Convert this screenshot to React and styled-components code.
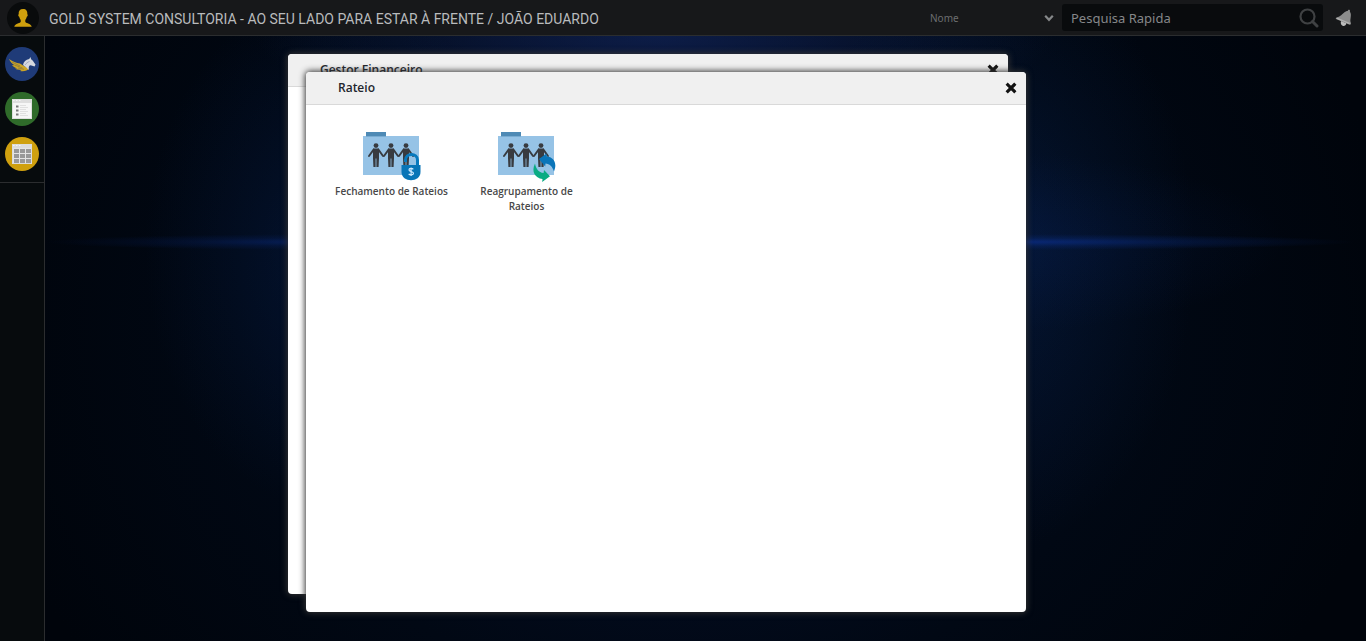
import React from "react";
import styled, { createGlobalStyle } from "styled-components";

const GlobalStyle = createGlobalStyle`
  * { box-sizing: border-box; }
  body {
    margin: 0;
    background: #00040d;
    font-family: "Noto Sans", "Open Sans", sans-serif;
  }
  button, input, select { font-family: inherit; }
`;

const Page = styled.div`
  min-height: 100vh;
  display: flex;
  flex-direction: column;
`;

const TopBar = styled.header`
  height: 36px;
  display: flex;
  align-items: center;
  padding: 0 13px 0 7px;
  background: #17181a;
  border-bottom: 1px solid #2b2d2f;
`;

const UserButton = styled.button`
  width: 32px;
  height: 32px;
  padding: 0;
  border: 0;
  border-radius: 50%;
  background: #090b0c;
  display: grid;
  place-items: center;
`;

const Title = styled.h1`
  flex: 1;
  margin: 0 0 0 10px;
  padding-top: 2px;
  font: 400 14px/20px Roboto, "Open Sans", sans-serif;
  color: #b9bbbd;
  white-space: nowrap;
`;

const Filter = styled.label`
  position: relative;
  display: flex;
  align-items: center;
  width: 132px;
  margin-right: 4px;
  svg { position: absolute; right: 4px; pointer-events: none; }
`;

const Select = styled.select`
  appearance: none;
  width: 100%;
  height: 26px;
  padding: 0 20px 0 4px;
  border: 0;
  background: transparent;
  color: #6c6e70;
  font-size: 10px;
`;

const Search = styled.form`
  display: flex;
  align-items: center;
  width: 261px;
  height: 27px;
  padding: 0 4px 0 9px;
  border-radius: 3px;
  background: #090b0d;
`;

const SearchInput = styled.input`
  flex: 1;
  min-width: 0;
  height: 24px;
  padding: 0;
  border: 0;
  outline: 0;
  background: transparent;
  color: #858789;
  font-size: 13px;
  &::placeholder { color: #858789; opacity: 1; }
`;

const IconButton = styled.button`
  padding: 0;
  border: 0;
  background: transparent;
  display: grid;
  place-items: center;
  margin-left: ${(p) => p.$gap || 0}px;
`;

const Body = styled.div`
  flex: 1;
  display: flex;
`;

const SideBar = styled.nav`
  width: 45px;
  background: #070b0d;
  border-right: 1px solid #2b2d2f;
`;

const Shortcuts = styled.div`
  display: flex;
  flex-direction: column;
  align-items: center;
  gap: 11px;
  padding: 11px 0;
  border-bottom: 1px solid #2b2d2f;
`;

const Shortcut = styled.button`
  width: 34px;
  height: 34px;
  padding: 0;
  border: 0;
  border-radius: 50%;
  background: ${(p) => p.$color};
  display: grid;
  place-items: center;
`;

const Desktop = styled.main`
  flex: 1;
  position: relative;
  min-height: 596px;
  overflow: hidden;
  background:
    radial-gradient(ellipse 350px 8px at 960px 206px, rgba(12, 52, 160, 0.6), rgba(10, 45, 130, 0.3) 50%, transparent),
    radial-gradient(ellipse 290px 8px at 290px 206px, rgba(10, 46, 140, 0.5), rgba(8, 36, 110, 0.25) 50%, transparent),
    radial-gradient(ellipse 300px 90px at 940px 206px, rgba(8, 36, 100, 0.26), transparent),
    radial-gradient(ellipse 200px 300px at 950px 215px, rgba(8, 38, 86, 0.4), transparent),
    radial-gradient(ellipse 190px 260px at 290px 215px, rgba(6, 32, 80, 0.42), transparent),
    radial-gradient(ellipse 400px 90px at 610px 0, rgba(22, 44, 108, 0.55), transparent),
    radial-gradient(ellipse 720px 600px at 640px 290px, #030d24 25%, #010814 62%, #00040b);
`;

const Window = styled.section`
  position: absolute;
  left: ${(p) => p.$x}px;
  top: ${(p) => p.$y}px;
  width: 720px;
  height: 540px;
  border-radius: 4px;
  overflow: hidden;
  background: #fff;
  box-shadow: 0 0 6px 1px #333;
`;

const WindowBar = styled.header`
  display: flex;
  align-items: center;
  justify-content: space-between;
  height: 33px;
  padding: 0 9px 0 32px;
  background: #f0f0f0;
  border-bottom: 1px solid #d9d9d9;
`;

const WindowTitle = styled.h2`
  margin: 0;
  font-family: "Open Sans", sans-serif;
  font-size: 12px;
  line-height: 16px;
  font-weight: 600;
  color: #22252c;
`;

const AppGrid = styled.div`
  display: flex;
  flex-wrap: wrap;
  align-items: flex-start;
  padding: 26px 18px;
`;

const AppItem = styled.button`
  width: 135px;
  padding: 0 10px;
  border: 0;
  background: transparent;
  display: flex;
  flex-direction: column;
  align-items: center;
  gap: 1px;
  color: #484848;
  font-family: "Open Sans", sans-serif;
  font-size: 10px;
  font-weight: 600;
  line-height: 15px;
`;

const CloseIcon = () => (
  <svg width="12" height="12" viewBox="0 0 12 12" fill="none">
    <path d="M2.8 2.8 9.2 9.2M9.2 2.8 2.8 9.2" stroke="#111" strokeWidth="3.2" strokeLinecap="square" />
  </svg>
);

const Person = ({ x }) => (
  <g transform={`translate(${x} 0)`} fill="#383b40">
    <circle cx="0" cy="14.6" r="2.4" />
    <path d="M-3 17.6h6v9.400L2.600 36H.4v-8.500h-.8V36h-2.200l-.4-9z" />
    <path d="M-2.400 18.600-7 25M2.400 18.600 7 25" stroke="#383b40" strokeWidth="1.900" strokeLinecap="round" />
  </g>
);

const LockBadge = () => (
  <g>
    <path d="M43.500 31v-2c0-7.500 12-7.500 12 0v6" fill="none" stroke="#0879bd" strokeWidth="3" />
    <path d="M39.500 34h19v7c0 11-19 11-19 0z" fill="#0875b7" />
    <path
      d="M51.300 38.300c-.8-1.200-4.300-1.400-4.300.6 0 2.200 4.500 1.200 4.500 3.400 0 2-3.800 2-4.800.6M49.100 36.500v8.500"
      fill="none"
      stroke="#cfeaff"
      strokeWidth="1.200"
    />
  </g>
);

const SyncBadge = () => (
  <g>
    <path d="M42 28 49.500 22.500l.2 2.700c7 1 10.800 7 7.300 15.300-1.500-5-4.500-7.800-8.500-8l-.3 3z" fill="#0a75b9" />
    <path d="M38 32.500c-4 8 0 14.500 7.500 15.500l-.3 3 7.800-5.700-6-6.200-.4 2.900c-4.800-.4-7.600-4-8.600-9.500z" fill="#0aab83" />
  </g>
);

const FolderIcon = ({ children }) => (
  <svg width="60" height="52" viewBox="0 0 60 52">
    <path d="M4 1h20v5H4z" fill="#4e8ab5" />
    <path d="M1 5h56v39H1z" fill="#96c3e6" />
    <path d="M4 5h20v1H4z" fill="#78abd1" />
    <Person x={14} />
    <Person x={29} />
    <Person x={44} />
    {children}
  </svg>
);

const UserIcon = () => (
  <svg width="18" height="20" viewBox="0 0 18 20" fill="#cfa00d">
    <path d="M9 1c3.200 0 4.600 2 4.300 5.200.9.300.4 2.200-.5 2.600-.3 1.400-.8 2.400-1.500 3.100v2c1.200 1.500 6 1.500 6.400 4.900H.3c.4-3.400 5.200-3.400 6.400-4.900v-2c-.7-.7-1.200-1.700-1.500-3.100-.9-.4-1.400-2.300-.5-2.600C4.400 3 5.800 1 9 1z" />
  </svg>
);

const PegasusIcon = () => (
  <svg width="28" height="16" viewBox="0 0 28 16">
    <path d="M1 3c4 2.500 7 4 11 4.500l4 2.500 5 2.500c-1.500 2.500-5 3-9 2.500l1.500-1c-3 0-5-.4-6.500-1.400l2.500-.2C6.500 11.500 5 10.500 4 9l2.600.3C4 7.500 2 5.500 1 3z" fill="#cda526" />
    <path d="M4 6l8 4M6.500 9l8 3M10 12l6 1.300" stroke="#8b7b3b" strokeWidth=".8" />
    <path d="M15 9c.6-3.500 2.800-5.300 6.200-6L22.500 1l.6 2.300c2 1.200 2.700 3.200 4.400 5.200l-.9 2-4-1.300c-1.600 0-2 1.600-1.900 4.800-1.200-1.200-2.400-2.800-3.700-3.500z" fill="#d5d8df" />
    <path d="M17 9c1.500-1.800 2.500-3 4.500-3.500" stroke="#8997b2" strokeWidth=".7" fill="none" />
  </svg>
);

const ListIcon = () => (
  <svg width="20" height="20" viewBox="0 0 20 20">
    <path d="M0 0h20v20H0z" fill="#dedede" />
    <path d="M1 4h18v15H1z" fill="#f6f6f6" />
    <path d="M1 1.500h1.500M4 1.500h1.500M7 1.500h1.500" stroke="#f6f6f6" />
    <path d="M4 7.500h2.500M4 11.500h2.500M4 15.500h2.500" stroke="#777" strokeWidth="2" />
    <path d="M8 6.500h6M8 8.500h8M8 10.500h6M8 12.500h8M8 14.500h6M8 16.500h8" stroke="#e0e0e0" />
  </svg>
);

const TableIcon = () => (
  <svg width="20" height="20" viewBox="0 0 20 20">
    <path d="M0 0h20v20H0z" fill="#dcdcdc" />
    <path d="M1 1.500h1.500M4 1.500h1.500M7 1.500h1.500" stroke="#f4f4f4" />
    <path d="M1 4h18v15H1z" fill="#e4e4e4" />
    {[5, 10, 15].map((y) =>
      [2, 8, 14].map((x) => <rect key={`${x}-${y}`} x={x} y={y} width="5" height="4" fill="#999" />)
    )}
  </svg>
);

const ChevronIcon = () => (
  <svg width="10" height="8" viewBox="0 0 10 8" fill="none">
    <path d="m1.200 1.800 3.800 4 3.800-4" stroke="#858789" strokeWidth="2.200" />
  </svg>
);

const SearchIcon = () => (
  <svg width="20" height="20" viewBox="0 0 20 20" fill="none" stroke="#3f4143">
    <circle cx="8.500" cy="8.500" r="7" strokeWidth="2.200" />
    <path d="m13.500 13.500 4.500 4.500" strokeWidth="3" strokeLinecap="round" />
  </svg>
);

const BellIcon = () => (
  <svg width="18" height="18" viewBox="0 0 18 18">
    <path d="M9.500 3.200c1.200-1 2.300-1.200 3.200-1.300.2-1.500 2.400-1.500 2.300.1-.1.500-.2.700.2 1.300.8 1.300.8 3 .5 5-.3 2.500-.7 3.700.2 5.700.3 1.500-.6 2-1.900 1.500L1.600 10.300c-1.200-.6-1-1.600.2-1.900C5.600 7.300 7 5.200 9.500 3.200z" fill="#8c8c8c" />
    <path d="m2.200 9.300 12 5" stroke="#b0b0b0" strokeWidth="1.300" strokeLinecap="round" />
    <path d="m6 12 5.400 2.300c-.5 2.300-2.200 3.200-3.800 2.500S5.400 14 6 12z" fill="#bbb" />
  </svg>
);

const DesktopWindow = ({ title, x, y, children }) => (
  <Window $x={x} $y={y} aria-label={title}>
    <WindowBar>
      <WindowTitle>{title}</WindowTitle>
      <IconButton aria-label="Fechar"><CloseIcon /></IconButton>
    </WindowBar>
    {children}
  </Window>
);

export default function App() {
  return (
    <Page>
      <GlobalStyle />
      <TopBar>
        <UserButton aria-label="Usuário"><UserIcon /></UserButton>
        <Title>GOLD SYSTEM CONSULTORIA - AO SEU LADO PARA ESTAR À FRENTE / JOÃO EDUARDO</Title>
        <Filter>
          <Select aria-label="Filtro" defaultValue="nome">
            <option value="nome">Nome</option>
          </Select>
          <ChevronIcon />
        </Filter>
        <Search role="search" onSubmit={(e) => e.preventDefault()}>
          <SearchInput type="text" placeholder="Pesquisa Rapida" aria-label="Pesquisa Rapida" />
          <IconButton type="submit" aria-label="Pesquisar"><SearchIcon /></IconButton>
        </Search>
        <IconButton $gap={12} aria-label="Notificações"><BellIcon /></IconButton>
      </TopBar>
      <Body>
        <SideBar>
          <Shortcuts>
            <Shortcut $color="#1f3b78" aria-label="Início"><PegasusIcon /></Shortcut>
            <Shortcut $color="#2f6b2a" aria-label="Lista"><ListIcon /></Shortcut>
            <Shortcut $color="#cfa00f" aria-label="Tabela"><TableIcon /></Shortcut>
          </Shortcuts>
        </SideBar>
        <Desktop>
          <DesktopWindow title="Gestor Financeiro" x={243} y={18} />
          <DesktopWindow title="Rateio" x={261} y={36}>
            <AppGrid>
              <AppItem>
                <FolderIcon><LockBadge /></FolderIcon>
                Fechamento de Rateios
              </AppItem>
              <AppItem>
                <FolderIcon><SyncBadge /></FolderIcon>
                Reagrupamento de Rateios
              </AppItem>
            </AppGrid>
          </DesktopWindow>
        </Desktop>
      </Body>
    </Page>
  );
}
